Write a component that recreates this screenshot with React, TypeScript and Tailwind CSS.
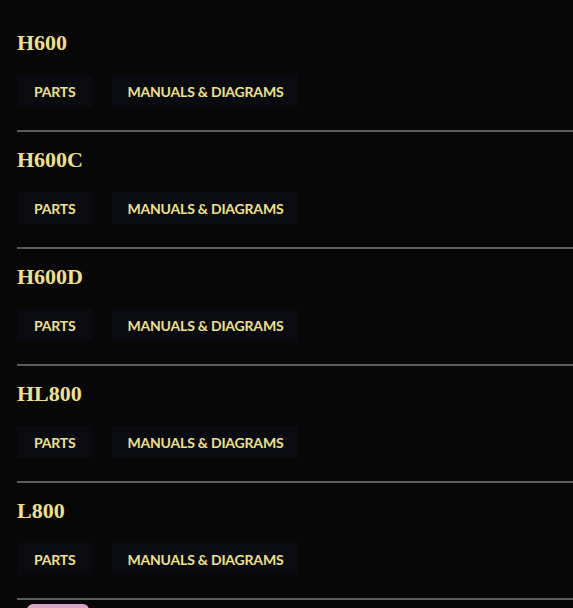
const models = ['H600', 'H600C', 'H600D', 'HL800', 'L800'];

function ModelSection({ name }: { name: string }) {
  return (
    <section className="pt-[14px] pb-[23px]">
      <h2
        className="text-[22px] leading-[28px] font-bold text-[#efe08b]"
        style={{ fontFamily: '"Liberation Serif", serif' }}
      >
        {name}
      </h2>
      <div className="mt-[18px] flex gap-[20px]">
        <button className="h-[32px] px-[17px] bg-[#0a0b10] text-[#efe08b] text-[14px] font-bold tracking-[-0.2px]">
          PARTS
        </button>
        <button className="h-[32px] px-[15px] bg-[#0a0b10] text-[#efe08b] text-[14px] font-bold tracking-[-0.2px]">
          MANUALS &amp; DIAGRAMS
        </button>
      </div>
    </section>
  );
}

export default function App() {
  return (
    <div
      className="min-h-[608px] w-full overflow-hidden bg-[#070707] pl-[17px] pt-[15px]"
      style={{ fontFamily: 'Lato, "Open Sans", sans-serif' }}
    >
      {models.map((m, i) => (
        <div key={m}>
          {i > 0 && <div className="h-[2px] bg-[#5c5c5c]" />}
          <ModelSection name={m} />
        </div>
      ))}
      <div className="h-[2px] bg-[#5c5c5c]" />
      <div className="ml-[10px] mt-[4px] h-[10px] w-[62px] rounded-t-[6px] bg-[#d9a3c4]" />
    </div>
  );
}
